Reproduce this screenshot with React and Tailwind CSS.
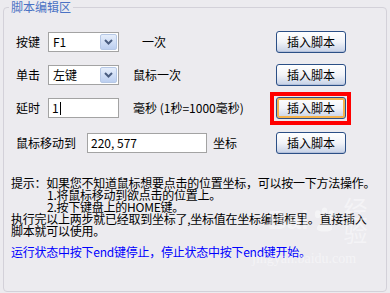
import React from 'react';

const FONT = "font-['Noto_Sans_CJK_SC','Liberation_Sans',sans-serif]";

function Chevron() {
    return (
        <svg width="9" height="6" viewBox="0 0 9 6">
            <path d="M1 1 L4.5 4.5 L8 1" fill="none" stroke="#4a5d80" strokeWidth="2" />
        </svg>
    );
}

function ComboBox({ value }) {
    return (
        <div className="relative w-[71px] h-[20px] bg-white border border-[#a3a3a3] flex items-center pl-[4px] text-[12px] leading-none text-black">
            {value}
            <span className="absolute right-[1px] top-[1px] w-[17px] h-[16px] rounded-[2px] border border-[#b6c8e6] bg-linear-to-b from-[#e6eefb] to-[#bccff0] flex items-center justify-center">
                <Chevron />
            </span>
        </div>
    );
}

function InsertButton({ hot }) {
    return (
        <button
            className={`w-[70px] h-[22px] rounded-[3px] border border-[#2b4f86] bg-linear-to-b from-white via-[#f1f3f8] to-[#c6d1e6] text-[12px] leading-none text-black ${hot ? 'shadow-[inset_0_0_0_2px_#f5b24a]' : 'shadow-[inset_0_-1px_0_#b3c0da]'}`}
        >
            插入脚本
        </button>
    );
}

export default function App() {
    return (
        <div className={`relative w-[390px] h-[293px] bg-[#ecebef] overflow-hidden ${FONT}`}>
            <fieldset className="mx-[3px] h-[292px] border border-[#d3d1d9] rounded-[4px]">
                <legend className="ml-[5px] px-[2px] text-[12px] leading-[14px] text-[#4a72c4]">脚本编辑区</legend>

                <div className="pl-[12px] pr-[40px] mt-[17px] flex flex-col text-[12px] leading-none text-black">
                    <div className="h-[22px] flex items-center">
                        <span className="w-[32px]">按键</span>
                        <ComboBox value="F1" />
                        <span className="ml-[23px]">一次</span>
                        <div className="ml-auto"><InsertButton /></div>
                    </div>

                    <div className="h-[22px] mt-[11px] flex items-center">
                        <span className="w-[32px]">单击</span>
                        <ComboBox value="左键" />
                        <span className="ml-[14px]">鼠标一次</span>
                        <div className="ml-auto"><InsertButton /></div>
                    </div>

                    <div className="h-[22px] mt-[11px] flex items-center">
                        <span className="w-[32px]">延时</span>
                        <div className="w-[71px] h-[20px] bg-white border border-[#a3a3a3] flex items-center pl-[3px]">
                            1<span className="ml-[1px] w-px h-[13px] bg-black" />
                        </div>
                        <span className="ml-[14px] whitespace-pre">毫秒 (1秒=1000毫秒)</span>
                        <div className="ml-auto relative">
                            <InsertButton hot />
                            <span className="absolute -left-[6px] -top-[5px] w-[81px] h-[33px] border-4 border-[#ff0000] pointer-events-none" />
                        </div>
                    </div>

                    <div className="h-[22px] mt-[13px] flex items-center">
                        <span className="w-[71px]">鼠标移动到</span>
                        <div className="w-[120px] h-[20px] bg-white border border-[#a3a3a3] flex items-center pl-[3px]">220, 577</div>
                        <span className="ml-[6px]">坐标</span>
                        <div className="ml-auto"><InsertButton /></div>
                    </div>
                </div>

                <div className="mt-[23px] pl-[7px] text-[12px] leading-[12px] tracking-[-0.25px] text-black whitespace-nowrap">
                    <div>提示：如果您不知道鼠标想要点击的位置坐标，可以按一下方法操作。</div>
                    <div className="pl-[36px]">1.将鼠标移动到欲点击的位置上。</div>
                    <div className="pl-[36px]">2.按下键盘上的HOME键。</div>
                    <div>执行完以上两步就已经取到坐标了,坐标值在坐标编辑框里。直接插入</div>
                    <div>脚本就可以使用。</div>
                    <div className="mt-[9px] text-[#0000ff]">运行状态中按下end键停止，停止状态中按下end键开始。</div>
                </div>
            </fieldset>

            {/* faint watermark */}
            <div className="absolute left-[268px] top-[196px] flex items-center gap-[2px] text-white/45 pointer-events-none">
                <span className="text-[26px] leading-none font-bold font-['Liberation_Sans',sans-serif]">Bai</span>
                <svg width="30" height="30" viewBox="0 0 30 30" className="opacity-45">
                    <ellipse cx="8" cy="9" rx="3" ry="4" fill="#fff" />
                    <ellipse cx="15" cy="6" rx="3" ry="4" fill="#fff" />
                    <ellipse cx="22" cy="9" rx="3" ry="4" fill="#fff" />
                    <path d="M7 24 C7 16 23 16 23 24 C23 28 7 28 7 24 Z" fill="#fff" />
                </svg>
                <span className="text-[24px] leading-none ml-[2px]">经验</span>
            </div>
            <div className="absolute left-[252px] top-[252px] text-[14px] leading-none text-white/45 font-['Liberation_Serif',serif] pointer-events-none">
                jingyan.baidu.com
            </div>
        </div>
    );
}
